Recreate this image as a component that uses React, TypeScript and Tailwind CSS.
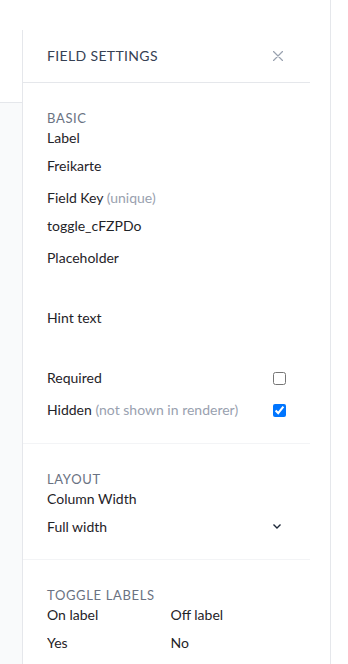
const Field = ({ label, hint, value, multiline }: { label: string; hint?: string; value: string; multiline?: boolean }) => (
  <div className="mb-2">
    <label className="block leading-5 text-[#1f2328]">
      {label}
      {hint && <span className="text-gray-400"> {hint}</span>}
    </label>
    {multiline ? (
      <textarea className="mt-1 block h-7 w-full resize-none leading-[26px] outline-none" defaultValue={value} />
    ) : (
      <input className="mt-1 block h-7 w-full pb-px outline-none" defaultValue={value} />
    )}
  </div>
);

const Heading = ({ children }: { children: string }) => (
  <h3 className="mb-0.5 text-[13px] leading-4 tracking-wider text-gray-500 uppercase">{children}</h3>
);

export default function App() {
  return (
    <div
      className="flex h-[664px] w-[348px] overflow-hidden bg-white text-sm text-[#1f2328]"
      style={{ fontFamily: 'Lato, "Noto Sans", sans-serif' }}
    >
      <div className="flex w-[331px] border-r border-gray-200">
        <div className="flex w-[22px] shrink-0 flex-col">
          <div className="h-[103px] border-b border-gray-200" />
          <div className="flex-1 bg-gray-50" />
        </div>
        <aside className="mt-[30px] w-[288px] shrink-0 border-l border-gray-200">
          <div className="flex h-[53px] items-center justify-between border-b border-gray-200 px-6">
            <h2 className="tracking-wide text-gray-700 uppercase">Field Settings</h2>
            <button className="mr-[3px] text-gray-400">
              <svg width="10" height="10" viewBox="0 0 10 10" fill="none" stroke="currentColor" strokeWidth="1.2" strokeLinecap="round">
                <path d="M0.5 0.5l9 9M9.5 0.5l-9 9" />
              </svg>
            </button>
          </div>

          <section className="border-b border-gray-100 px-6 pt-[27px] pb-[23px]">
            <Heading>Basic</Heading>
            <Field label="Label" value="Freikarte" />
            <Field label="Field Key" hint="(unique)" value="toggle_cFZPDo" />
            <Field label="Placeholder" value="" />
            <Field label="Hint text" value="" multiline />
            <div className="flex flex-col gap-3">
              <label className="flex h-5 items-center justify-between">
                <span>Required</span>
                <input type="checkbox" className="h-[13px] w-[13px]" />
              </label>
              <label className="flex h-5 items-center justify-between">
                <span>
                  Hidden <span className="text-gray-400">(not shown in renderer)</span>
                </span>
                <input type="checkbox" defaultChecked className="h-[13px] w-[13px]" />
              </label>
            </div>
          </section>

          <section className="border-b border-gray-100 px-6 pt-[27px] pb-[18px]">
            <Heading>Layout</Heading>
            <label className="block leading-5">Column Width</label>
            <div className="relative mt-1">
              <select className="block h-7 w-full appearance-none pb-px outline-none" defaultValue="full">
                <option value="full">Full width</option>
                <option value="half">Half width</option>
              </select>
              <svg
                className="pointer-events-none absolute top-[11px] right-[5px] text-gray-800"
                width="8"
                height="5"
                viewBox="0 0 8 5"
                fill="none"
                stroke="currentColor"
                strokeWidth="1.4"
              >
                <path d="M0.5 0.5L4 4L7.5 0.5" />
              </svg>
            </div>
          </section>

          <section className="px-6 pt-[27px]">
            <Heading>Toggle Labels</Heading>
            <div className="grid grid-cols-2 gap-x-2">
              <div>
                <label className="block leading-5">On label</label>
                <input className="mt-1 block h-7 w-full pb-px outline-none" defaultValue="Yes" />
              </div>
              <div>
                <label className="block leading-5">Off label</label>
                <input className="mt-1 block h-7 w-full pb-px outline-none" defaultValue="No" />
              </div>
            </div>
          </section>
        </aside>
      </div>
    </div>
  );
}
